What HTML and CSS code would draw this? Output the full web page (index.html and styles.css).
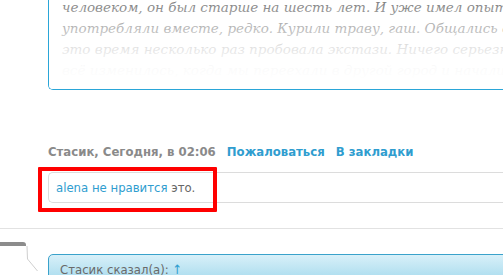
FILE: index.html
```html
<!DOCTYPE html>
<html lang="ru">
<head>
    <meta charset="UTF-8">
    <meta name="viewport" content="width=device-width, initial-scale=1.0">
    <title>Стасик</title>
    <link rel="stylesheet" href="styles.css">
</head>
<body>
    <div class="thread">
        <div class="quote">
            <div class="quote-text">
                <div class="quote-line">человеком, он был старше на шесть лет. И уже имел опыт употребления</div>
                <div class="quote-line">употребляли вместе, редко. Курили траву, гаш. Общались с его друзьями</div>
                <div class="quote-line">это время несколько раз пробовала экстази. Ничего серьезного не было</div>
                <div class="quote-line">всё изменилось, когда мы переехали в другой город и начали жить</div>
            </div>
            <div class="quote-fade"></div>
        </div>

        <div class="meta">
            <span class="author">Стасик, Сегодня, в 02:06</span>
            <a class="action" href="#">Пожаловаться</a>
            <a class="action" href="#">В закладки</a>
        </div>

        <div class="likes">
            <a href="#">alena</a> <a href="#">не нравится</a> это.
            <div class="highlight"></div>
        </div>

        <div class="separator"></div>

        <div class="post">
            <svg class="user-arrow" width="48" height="32" viewBox="0 0 48 32">
                <path d="M0 0 H23 Q26 0 26 3 V4 H0 Z" fill="#8c8c8c"/>
                <path d="M27 4 L27.5 17 L37.5 29" fill="none" stroke="#cfcfcf" stroke-width="1"/>
            </svg>
            <div class="bbquote">
                <div class="bbquote-head">Стасик сказал(а): <a href="#">↑</a></div>
            </div>
        </div>
    </div>
</body>
</html>
```

FILE: styles.css
```css
body {
    margin: 0;
    overflow: hidden;
    background: #fff;
    font-family: 'DejaVu Sans Condensed', 'DejaVu Sans', sans-serif;
    color: #555;
}
a {
    color: #2f9dcf;
    text-decoration: none;
}
.thread {
    width: 600px;
}
.quote {
    position: relative;
    margin-left: 48px;
    height: 89px;
    overflow: hidden;
    border-left: 1px solid #2aa6d8;
    border-bottom: 1px solid #2aa6d8;
    border-bottom-left-radius: 5px;
}
.quote-text {
    margin-top: -3px;
    padding-left: 13px;
    font-family: 'DejaVu Serif', serif;
    font-style: italic;
    font-size: 13.5px;
    line-height: 21px;
    color: #666;
}
.quote-line {
    white-space: nowrap;
}
.quote-fade {
    position: absolute;
    left: 0;
    right: 0;
    top: 0;
    bottom: 0;
    background: linear-gradient(to bottom, rgba(255,255,255,0.15) 0px, rgba(255,255,255,0.5) 25px, rgba(255,255,255,0.82) 48px, rgba(255,255,255,0.96) 66px, #fff 80px);
}
.meta {
    margin: 54px 0 0 48px;
    font-size: 13px;
    line-height: 16px;
    font-weight: bold;
}
.author {
    color: #8a8a8a;
}
.action {
    margin-left: 7px;
}
.likes {
    position: relative;
    margin: 12px 0 0 48px;
    padding: 7px 7px 6px;
    font-size: 13px;
    line-height: 16px;
    color: #666;
    border: 1px solid #dcdcdc;
    border-right: none;
    border-radius: 5px 0 0 5px;
}
.highlight {
    position: absolute;
    left: -11px;
    top: -6px;
    width: 179px;
    height: 45px;
    box-sizing: border-box;
    border: 4px solid #f00;
    border-radius: 1px;
}
.separator {
    margin-top: 25px;
    border-top: 1px solid #e2e2e2;
}
.post {
    display: flex;
    margin-top: 13px;
}
.user-arrow {
    flex: none;
}
.bbquote {
    flex: 1;
    margin-top: 12px;
    border: 1px solid #3aa2cb;
    border-radius: 5px 0 0 0;
    background: linear-gradient(to bottom, #d8f0f9, #8ccfe7);
    height: 40px;
}
.bbquote-head {
    padding: 7px 11px;
    font-size: 13px;
    line-height: 16px;
    color: #6a6a6a;
}
```
